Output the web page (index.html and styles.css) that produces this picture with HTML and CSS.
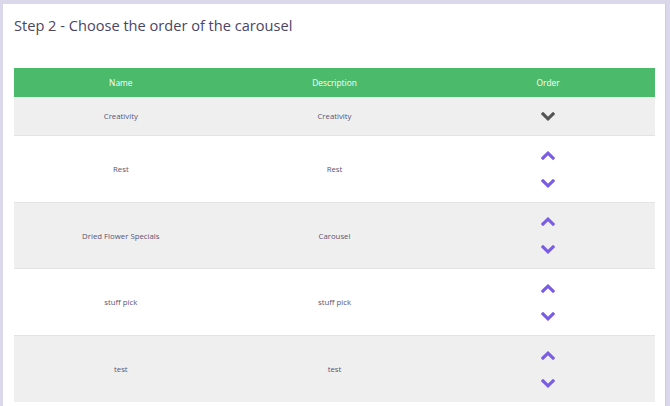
FILE: index.html
```html
<!DOCTYPE html>
<html lang="en">
<head>
<meta charset="utf-8">
<link rel="stylesheet" href="styles.css">
</head>
<body>
<div class="card">
  <h2 class="title">Step 2 - Choose the order of the carousel</h2>
  <table class="order-table">
    <thead>
      <tr><th>Name</th><th>Description</th><th>Order</th></tr>
    </thead>
    <tbody>
      <tr class="stripe">
        <td>Creativity</td><td>Creativity</td>
        <td><div class="ctrls">
          <span class="btn dark"><svg width="14" height="9" viewBox="0 0 14 9"><polyline points="2,2 7,6.8 12,2" fill="none" stroke="currentColor" stroke-width="3.2" stroke-linecap="square"/></svg></span>
        </div></td>
      </tr>
      <tr>
        <td>Rest</td><td>Rest</td>
        <td><div class="ctrls">
          <span class="btn"><svg width="14" height="9" viewBox="0 0 14 9"><polyline points="2,7 7,2.2 12,7" fill="none" stroke="currentColor" stroke-width="3.2" stroke-linecap="square"/></svg></span>
          <span class="btn"><svg width="14" height="9" viewBox="0 0 14 9"><polyline points="2,2 7,6.8 12,2" fill="none" stroke="currentColor" stroke-width="3.2" stroke-linecap="square"/></svg></span>
        </div></td>
      </tr>
      <tr class="stripe">
        <td>Dried Flower Specials</td><td>Carousel</td>
        <td><div class="ctrls">
          <span class="btn"><svg width="14" height="9" viewBox="0 0 14 9"><polyline points="2,7 7,2.2 12,7" fill="none" stroke="currentColor" stroke-width="3.2" stroke-linecap="square"/></svg></span>
          <span class="btn"><svg width="14" height="9" viewBox="0 0 14 9"><polyline points="2,2 7,6.8 12,2" fill="none" stroke="currentColor" stroke-width="3.2" stroke-linecap="square"/></svg></span>
        </div></td>
      </tr>
      <tr>
        <td>stuff pick</td><td>stuff pick</td>
        <td><div class="ctrls">
          <span class="btn"><svg width="14" height="9" viewBox="0 0 14 9"><polyline points="2,7 7,2.2 12,7" fill="none" stroke="currentColor" stroke-width="3.2" stroke-linecap="square"/></svg></span>
          <span class="btn"><svg width="14" height="9" viewBox="0 0 14 9"><polyline points="2,2 7,6.8 12,2" fill="none" stroke="currentColor" stroke-width="3.2" stroke-linecap="square"/></svg></span>
        </div></td>
      </tr>
      <tr class="stripe">
        <td>test</td><td>test</td>
        <td><div class="ctrls">
          <span class="btn"><svg width="14" height="9" viewBox="0 0 14 9"><polyline points="2,7 7,2.2 12,7" fill="none" stroke="currentColor" stroke-width="3.2" stroke-linecap="square"/></svg></span>
          <span class="btn"><svg width="14" height="9" viewBox="0 0 14 9"><polyline points="2,2 7,6.8 12,2" fill="none" stroke="currentColor" stroke-width="3.2" stroke-linecap="square"/></svg></span>
        </div></td>
      </tr>
    </tbody>
  </table>
</div>
</body>
</html>
```

FILE: styles.css
```css
html, body {
  margin: 0;
  padding: 0;
}
body {
  background: #dbd8ec;
  font-family: "Open Sans", "Noto Sans", sans-serif;
  color: #5a5472;
  overflow: hidden;
}
.card {
  background: #ffffff;
  margin: 4px 4px 0 3px;
  padding: 10px 10px 20px 11px;
  border-right: 1px solid #cfcbe2;
  min-height: 420px;
  box-sizing: border-box;
}
.title {
  margin: 0;
  font-size: 14.6px;
  font-weight: 400;
  line-height: 22px;
  color: #4a4566;
}
.order-table {
  width: 100%;
  margin-top: 32px;
  border-collapse: collapse;
  table-layout: fixed;
}
.order-table th {
  background: #4bba6b;
  color: #ffffff;
  font-weight: 400;
  font-size: 8.4px;
  height: 29px;
  padding: 0;
  text-align: center;
}
.order-table td {
  font-size: 7.8px;
  text-align: center;
  padding: 10px 0;
  border-top: 1px solid #e3e3e6;
}
.order-table tbody tr:first-child td {
  border-top: none;
}
.order-table tbody tr:not(:first-child) td {
  padding: 10px 0 9.7px;
}
.order-table tr.stripe td {
  background: #efefef;
}
.ctrls {
  display: flex;
  flex-direction: column;
  align-items: center;
  gap: 10px;
}
.btn {
  height: 18px;
  display: flex;
  align-items: center;
  justify-content: center;
  color: #7b5ce5;
}
.btn.dark {
  color: #555555;
}
.btn svg {
  display: block;
}
```
